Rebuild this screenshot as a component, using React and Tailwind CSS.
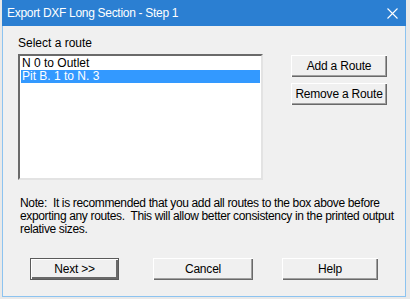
import React from "react";

const routes = ["N 0 to Outlet", "Pit B. 1 to N. 3"];

function Btn({ children, className = "", isDefault = false }) {
  return (
    <button
      className={`h-[22px] flex items-center justify-center bg-[#f0f0f0] text-[12px] tracking-[-0.2px] text-black ${
        isDefault
          ? "border border-[#5a5a5a] shadow-[inset_1px_1px_0_#ffffff,inset_-2px_-2px_0_#696969]"
          : "shadow-[inset_1px_1px_0_#ffffff,inset_-1px_-1px_0_#696969,inset_-2px_-2px_0_#a0a0a0]"
      } ${className}`}
    >
      {children}
    </button>
  );
}

export default function App() {
  const selected = 1;
  return (
    <div
      className="w-[410px] h-[299px] bg-[#e9e9e9] overflow-hidden"
      style={{ fontFamily: '"Liberation Sans", Arial, sans-serif' }}
    >
      <div className="ml-[2px] w-[404px] h-[297px] flex flex-col">
        {/* title bar */}
        <div className="h-[26px] bg-[#2b7fd2] flex items-center justify-between pl-[5px] pr-[8px]">
          <span className="text-white text-[12px] tracking-[-0.3px] leading-none">
            Export DXF Long Section - Step 1
          </span>
          <svg width="11" height="11" viewBox="0 0 11 11">
            <path d="M0.5 0.5 L10.5 10.5 M10.5 0.5 L0.5 10.5" stroke="#fff" strokeWidth="1.1" />
          </svg>
        </div>

        {/* body */}
        <div className="flex-1 bg-[#f0f0f0] border-x border-b border-[#8cc3f0] flex flex-col pl-[15px]">
          <div className="flex mt-[10px]">
            <div className="flex flex-col">
              <div className="text-[12px] leading-[14px] text-black h-[18px]">Select a route</div>
              <div className="w-[245px] h-[126px] bg-white border-t-2 border-l-2 border-t-[#6a6a6a] border-l-[#6a6a6a] border-b-2 border-r-2 border-b-[#e3e3e3] border-r-[#e3e3e3] pt-[1px] pl-[1px] pr-[1px]">
                {routes.map((r, i) => (
                  <div
                    key={r}
                    className={`h-[13px] text-[12px] leading-[13px] pl-[1px] ${
                      i === selected ? "bg-[#3399ff] text-white" : "text-black"
                    }`}
                  >
                    {r}
                  </div>
                ))}
              </div>
            </div>
            <div className="flex flex-col gap-[6px] ml-[28px] mt-[19px]">
              <Btn className="w-[96px]">Add a Route</Btn>
              <Btn className="w-[96px]">Remove a Route</Btn>
            </div>
          </div>

          <p className="mt-[17px] pl-[2px] text-[12px] leading-[13px] tracking-[-0.35px] text-black whitespace-nowrap">
            Note:&nbsp; It is recommended that you add all routes to the box above before
            <br />
            exporting any routes.&nbsp; This will allow better consistency in the printed output
            <br />
            relative sizes.
          </p>

          <div className="flex mt-[22px] pl-[12px]">
            <Btn isDefault className="w-[89px]">Next &gt;&gt;</Btn>
            <Btn className="w-[100px] ml-[34px]">Cancel</Btn>
            <Btn className="w-[96px] ml-[29px]">Help</Btn>
          </div>
        </div>
      </div>
    </div>
  );
}
